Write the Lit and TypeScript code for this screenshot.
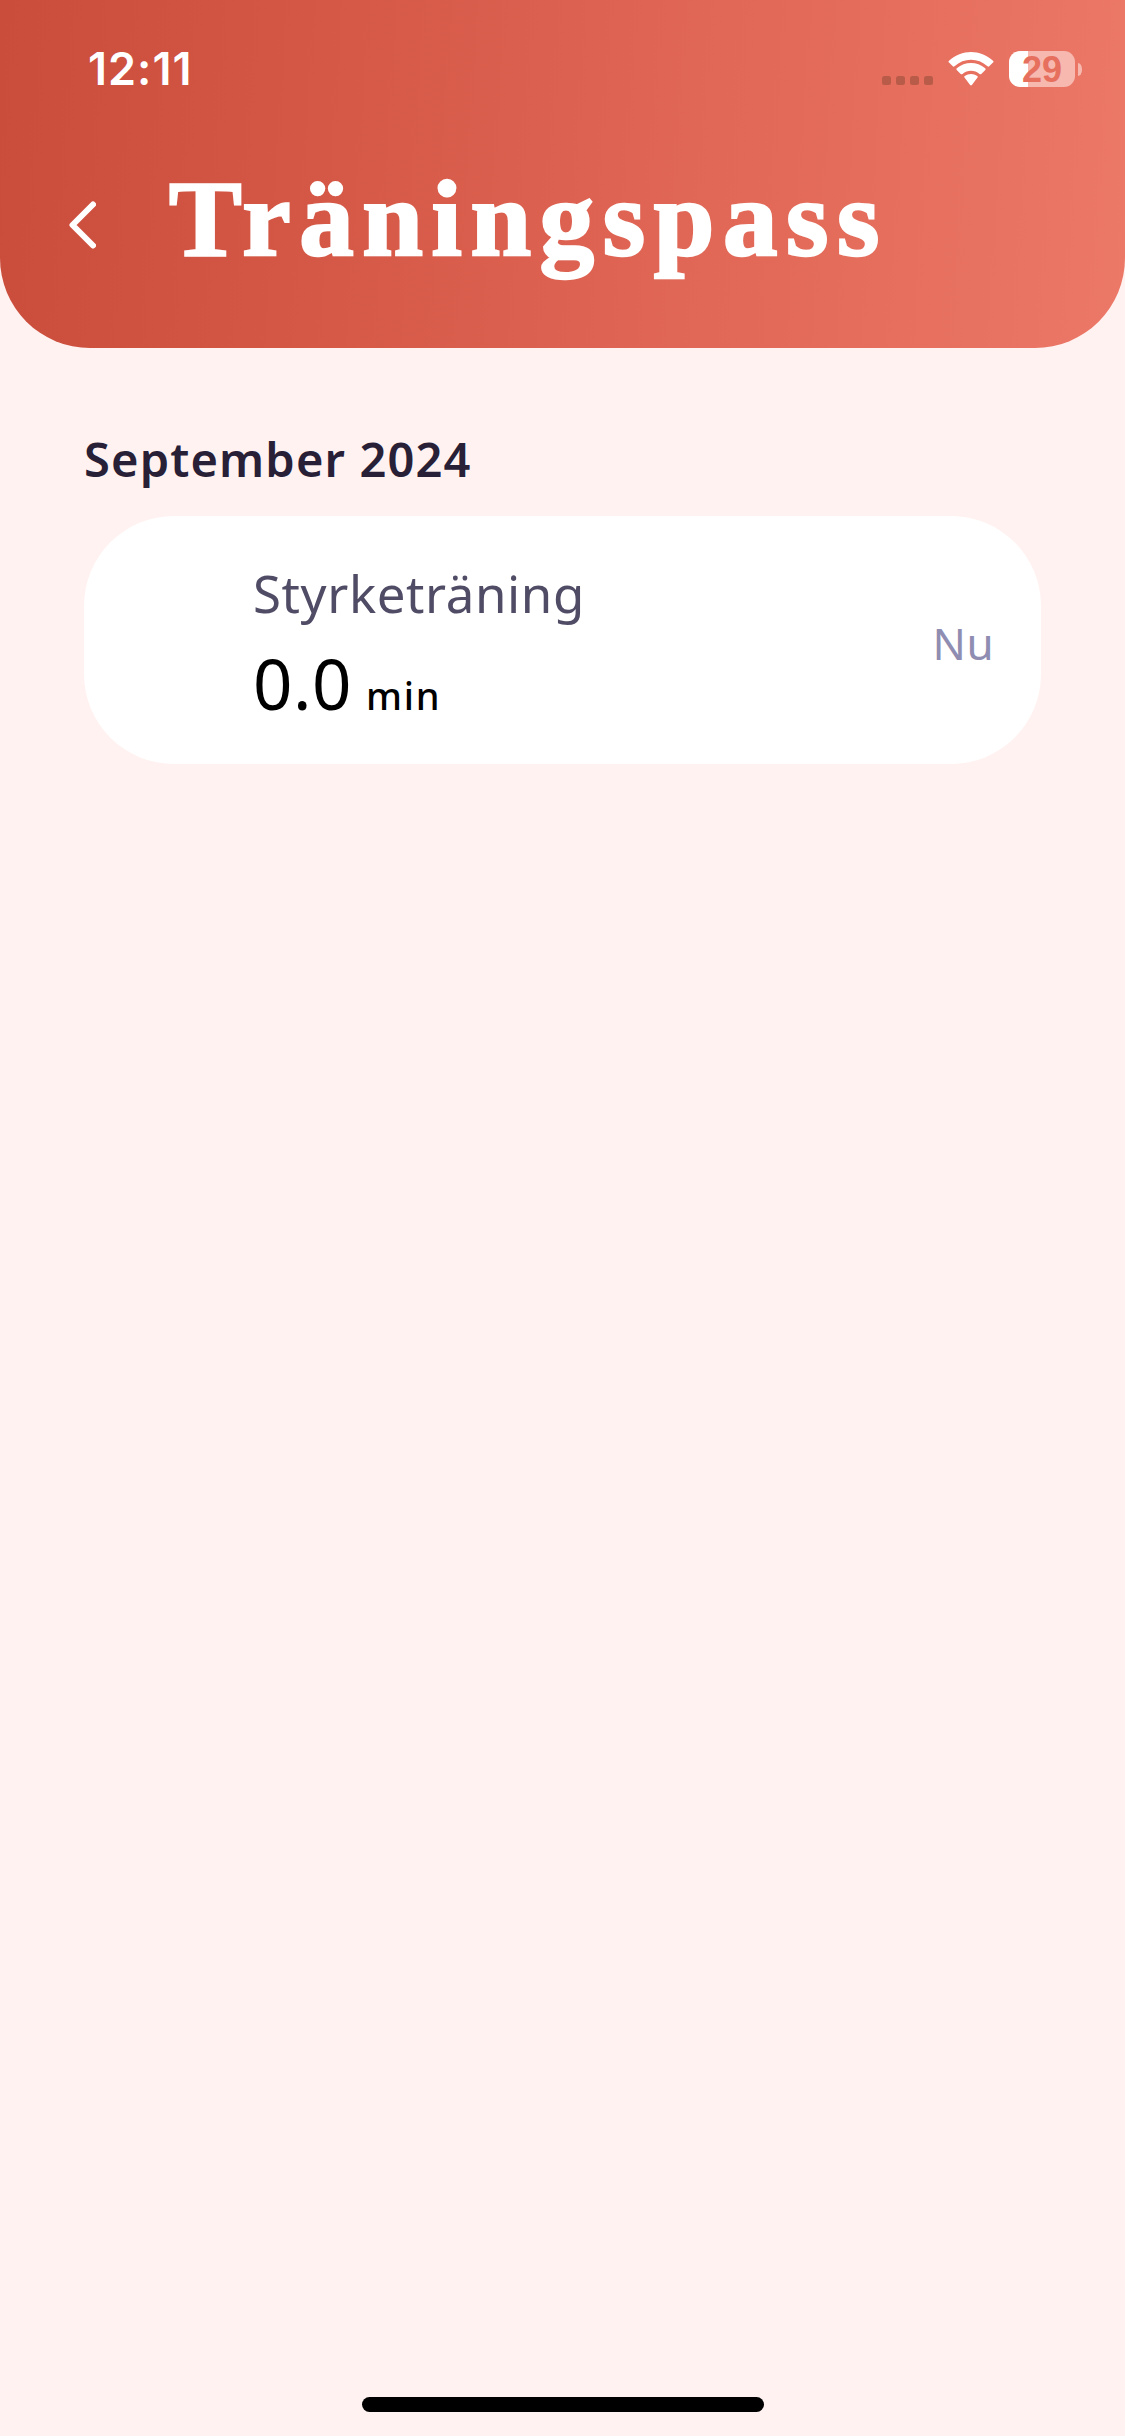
import { LitElement, html, css } from "lit";
import { customElement, property } from "lit/decorators.js";

@customElement("status-bar")
class StatusBar extends LitElement {
  @property() time = "12:11";
  @property({ type: Number }) battery = 29;

  static styles = css`
    :host {
      display: flex;
      justify-content: space-between;
      align-items: center;
      height: 138px;
      padding: 0 43px 0 87px;
      box-sizing: border-box;
      color: #fff;
      font-family: Inter, "Liberation Sans", sans-serif;
    }
    .time {
      padding-left: 1px;
      font-size: 45px;
      font-weight: 600;
      line-height: 60px;
      letter-spacing: 1px;
    }
    .icons {
      display: flex;
      align-items: center;
    }
    .dots {
      display: flex;
      gap: 5px;
      margin: 23px 15px 0 0;
    }
    .dot {
      width: 9px;
      height: 9px;
      border-radius: 2.5px;
      background: #b95b49;
    }
    .wifi {
      display: block;
      width: 46px;
      height: 34px;
      margin-right: 15px;
    }
    .battery {
      width: 66px;
      height: 36px;
      border-radius: 11px;
      background: linear-gradient(90deg, #fff 29%, #f6b8af 29%);
      color: #e66f5e;
      font-family: "Liberation Sans", sans-serif;
      font-size: 36px;
      font-weight: 700;
      line-height: 37px;
      text-align: center;
    }
    .nub {
      width: 4px;
      height: 13px;
      margin-left: 3px;
      border-radius: 0 4px 4px 0 / 0 6px 6px 0;
      background: #f6b8af;
    }
  `;

  render() {
    return html`
      <span class="time">${this.time}</span>
      <div class="icons">
        <div class="dots">${[0, 1, 2, 3].map(() => html`<i class="dot"></i>`)}</div>
        <svg class="wifi" viewBox="0 0 46 34" fill="#fff">
          <path d="M1 10.6Q0 9.700 1 8.700C13.500-2.900 32.500-2.900 45 8.700Q46 9.700 45 10.600L41.200 14.300Q40.400 15 39.500 14.300C30 5.700 16 5.700 6.500 14.300Q5.600 15 4.800 14.300Z" />
          <path d="M8.700 18Q7.900 17.100 8.800 16.300C17 9.200 29 9.200 37.200 16.300Q38.100 17.100 37.300 18L33.300 21.900Q32.400 22.600 31.500 21.900C26.500 17.700 19.500 17.700 14.500 21.900Q13.600 22.600 12.700 21.900Z" />
          <path d="M16.500 25.600Q15.700 24.800 16.700 24.100C20.500 21.400 25.500 21.400 29.300 24.100Q30.300 24.800 29.500 25.600L23.900 33Q23 33.900 22.100 33Z" />
        </svg>
        <div class="battery">${this.battery}</div>
        <i class="nub"></i>
      </div>
    `;
  }
}

@customElement("workout-card")
class WorkoutCard extends LitElement {
  @property() name = "";
  @property() amount = "";
  @property() unit = "";
  @property() when = "";

  static styles = css`
    :host {
      display: flex;
      justify-content: space-between;
      align-items: center;
      height: 248px;
      padding: 0 47px 3px 169px;
      box-sizing: border-box;
      border-radius: 90px;
      background: #fff;
    }
    .details {
      display: flex;
      flex-direction: column;
    }
    .name {
      color: #504c66;
      font-size: 51px;
      line-height: 72px;
      letter-spacing: 0.6px;
    }
    .value {
      display: flex;
      align-items: baseline;
      gap: 14px;
      height: 92px;
      color: #000;
      line-height: 108px;
    }
    .amount {
      font-size: 69px;
      letter-spacing: 0.5px;
    }
    .unit {
      font-size: 38px;
      font-weight: 500;
      letter-spacing: 1.8px;
    }
    .when {
      margin-top: 8px;
      color: #8f8db1;
      font-size: 44px;
      line-height: 60px;
      letter-spacing: 0.4px;
    }
  `;

  render() {
    return html`
      <div class="details">
        <span class="name">${this.name}</span>
        <div class="value">
          <span class="amount">${this.amount}</span>
          <span class="unit">${this.unit}</span>
        </div>
      </div>
      <span class="when">${this.when}</span>
    `;
  }
}

@customElement("app-root")
class AppRoot extends LitElement {
  static styles = css`
    :host {
      display: flex;
      flex-direction: column;
      height: 2436px;
      background: #fff2f1;
      font-family: "Noto Sans", "Open Sans", sans-serif;
    }
    .header {
      height: 348px;
      border-radius: 0 0 90px 90px;
      background: linear-gradient(94deg, #ca4c3a 0%, #dd6150 50%, #ec7867 100%);
    }
    .title-row {
      display: flex;
      align-items: center;
      gap: 73px;
      height: 174px;
      padding-left: 68px;
    }
    .back {
      display: block;
      width: 28px;
      height: 50px;
    }
    .title {
      margin: 0;
      padding-bottom: 13px;
      color: #fff;
      font-family: "Liberation Serif", serif;
      font-size: 109px;
      font-weight: 700;
      line-height: 130px;
      letter-spacing: 8.6px;
      -webkit-text-stroke: 2.5px #fff;
    }
    .content {
      display: flex;
      flex-direction: column;
      flex: 1;
      gap: 24px;
      padding: 78px 84px 0;
    }
    .month {
      margin: 0;
      color: #272036;
      font-size: 47px;
      font-weight: 600;
      line-height: 66px;
      letter-spacing: 1.15px;
    }
    .home-indicator {
      align-self: center;
      width: 402px;
      height: 15px;
      margin-bottom: 24px;
      border-radius: 8px;
      background: #000;
    }
  `;

  render() {
    return html`
      <header class="header">
        <status-bar></status-bar>
        <div class="title-row">
          <svg class="back" viewBox="0 0 28 50" fill="none" stroke="#fff" stroke-width="6" stroke-linecap="round" stroke-linejoin="round">
            <path d="M25 4.500L4.500 25L25 45.500" />
          </svg>
          <h1 class="title">Träningspass</h1>
        </div>
      </header>
      <main class="content">
        <h2 class="month">September 2024</h2>
        <workout-card name="Styrketräning" amount="0.0" unit="min" when="Nu"></workout-card>
      </main>
      <div class="home-indicator"></div>
    `;
  }
}
